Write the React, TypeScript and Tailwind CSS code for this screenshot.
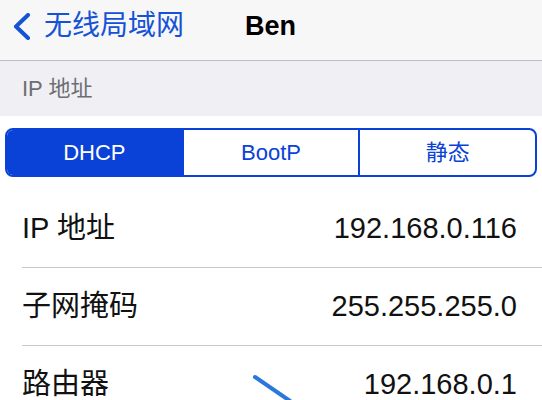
const rows = [
  { label: "IP 地址", value: "192.168.0.116" },
  { label: "子网掩码", value: "255.255.255.0" },
  { label: "路由器", value: "192.168.0.1" },
];

const segments = ["DHCP", "BootP", "静态"];

export default function App() {
  return (
    <div
      className="relative w-[542px] h-[400px] overflow-hidden bg-white"
      style={{ fontFamily: '"Liberation Sans", "Noto Sans CJK SC", sans-serif' }}
    >
      {/* nav bar */}
      <div className="h-[61px] bg-[#f7f7f7] border-b border-[#bdbdc0] flex items-center">
        <svg
          className="ml-[11px] mb-[8px] w-[22px] h-[27px]"
          viewBox="0 0 22 27"
          fill="none"
        >
          <path
            d="M17 2 L5 13.5 L17 25"
            stroke="#1452d6"
            strokeWidth="4"
            strokeLinecap="round"
            strokeLinejoin="round"
          />
        </svg>
        <span className="ml-[11px] mb-[8px] text-[28px] leading-none text-[#1452d6]">
          无线局域网
        </span>
        <span className="ml-[61px] mb-[8px] text-[27px] leading-none font-bold text-black">
          Ben
        </span>
      </div>

      {/* section header */}
      <div className="h-[55px] bg-[#efeff4] flex items-center pl-[22px]">
        <span className="text-[22px] leading-none text-[#6d6d72]">IP 地址</span>
      </div>

      {/* segmented control */}
      <div className="pt-[12px] px-[5px]">
        <div className="flex h-[49px] rounded-[8px] border-2 border-[#0a42d8] overflow-hidden">
          {segments.map((s, i) => (
            <div
              key={s}
              className={
                i === 0
                  ? "flex-1 flex items-center justify-center bg-[#0a42d8] text-white text-[22px]"
                  : "flex-1 flex items-center justify-center border-l-2 border-[#0a42d8] text-[#0a42d8] text-[22px]"
              }
            >
              {s}
            </div>
          ))}
        </div>
      </div>

      {/* rows */}
      <div className="mt-[13px]">
        {rows.map((r, i) => (
          <div key={r.label}>
            {i > 0 && <div className="ml-[22px] h-px bg-[#c8c7cc]" />}
            <div className="h-[77px] flex items-center justify-between pl-[22px] pr-[25px] text-[29px] text-[#111]">
              <span>{r.label}</span>
              <span>{r.value}</span>
            </div>
          </div>
        ))}
      </div>

      {/* pen mark */}
      <svg className="absolute left-[250px] top-[372px] w-[50px] h-[30px]" viewBox="0 0 50 30">
        <path
          d="M5 5 L40 29"
          stroke="#2a78de"
          strokeWidth="4"
          strokeLinecap="round"
        />
      </svg>
    </div>
  );
}
